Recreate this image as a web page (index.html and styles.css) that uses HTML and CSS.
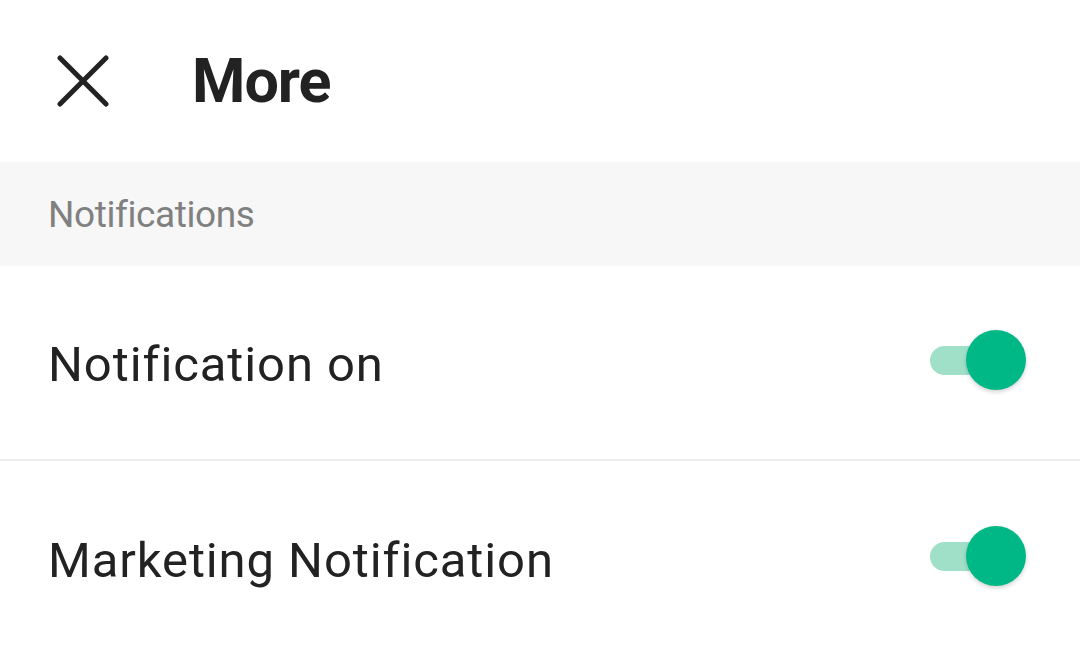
FILE: index.html
```html
<!DOCTYPE html>
<html>
<head>
<meta charset="utf-8">
<link rel="stylesheet" href="styles.css">
</head>
<body>
<div class="screen">
  <header class="topbar">
    <button class="close" aria-label="Close">
      <svg width="52" height="52" viewBox="0 0 52 52"><path d="M3 3 L49 49 M49 3 L3 49" stroke="#222" stroke-width="5" stroke-linecap="round" fill="none"/></svg>
    </button>
    <h1 class="title">More</h1>
  </header>
  <div class="section-head">Notifications</div>
  <div class="row">
    <span class="label">Notification on</span>
    <span class="switch"><span class="track"></span><span class="thumb"></span></span>
  </div>
  <div class="row last">
    <span class="label">Marketing Notification</span>
    <span class="switch"><span class="track"></span><span class="thumb"></span></span>
  </div>
</div>
</body>
</html>
```
FILE: styles.css
```css
html, body {
  margin: 0;
  padding: 0;
  background: #ffffff;
}
body {
  font-family: Roboto, "Noto Sans", sans-serif;
  color: #222222;
  width: 1080px;
  height: 652px;
  overflow: hidden;
}
.topbar {
  height: 162px;
  display: flex;
  align-items: center;
  padding-left: 57px;
  box-sizing: border-box;
}
.close {
  border: 0;
  background: none;
  padding: 0;
  width: 52px;
  height: 52px;
  display: flex;
}
.title {
  margin: 0 0 0 83px;
  font-size: 61px;
  font-weight: 700;
  color: #222222;
  letter-spacing: -1px;
}
.section-head {
  height: 104px;
  background: #f7f7f7;
  display: flex;
  align-items: center;
  padding-left: 48px;
  font-size: 37px;
  color: #808080;
  letter-spacing: -0.4px;
}
.row {
  height: 195px;
  display: flex;
  align-items: center;
  justify-content: space-between;
  padding: 0 54px 0 48px;
  border-bottom: 2px solid #eeeeee;
  box-sizing: border-box;
}
.row.last {
  border-bottom: 0;
}
.label {
  font-size: 49px;
  color: #222222;
  letter-spacing: 0.9px;
  padding-top: 4px;
}
.switch {
  position: relative;
  width: 96px;
  height: 60px;
  display: block;
  margin-top: -6px;
}
.track {
  position: absolute;
  left: 0;
  top: 16px;
  width: 82px;
  height: 29px;
  border-radius: 15px;
  background: #a0e0c9;
}
.thumb {
  position: absolute;
  right: 0;
  top: 0;
  width: 60px;
  height: 60px;
  border-radius: 50%;
  background: #00b886;
  box-shadow: 0 2px 4px rgba(0,0,0,0.18);
}
```
